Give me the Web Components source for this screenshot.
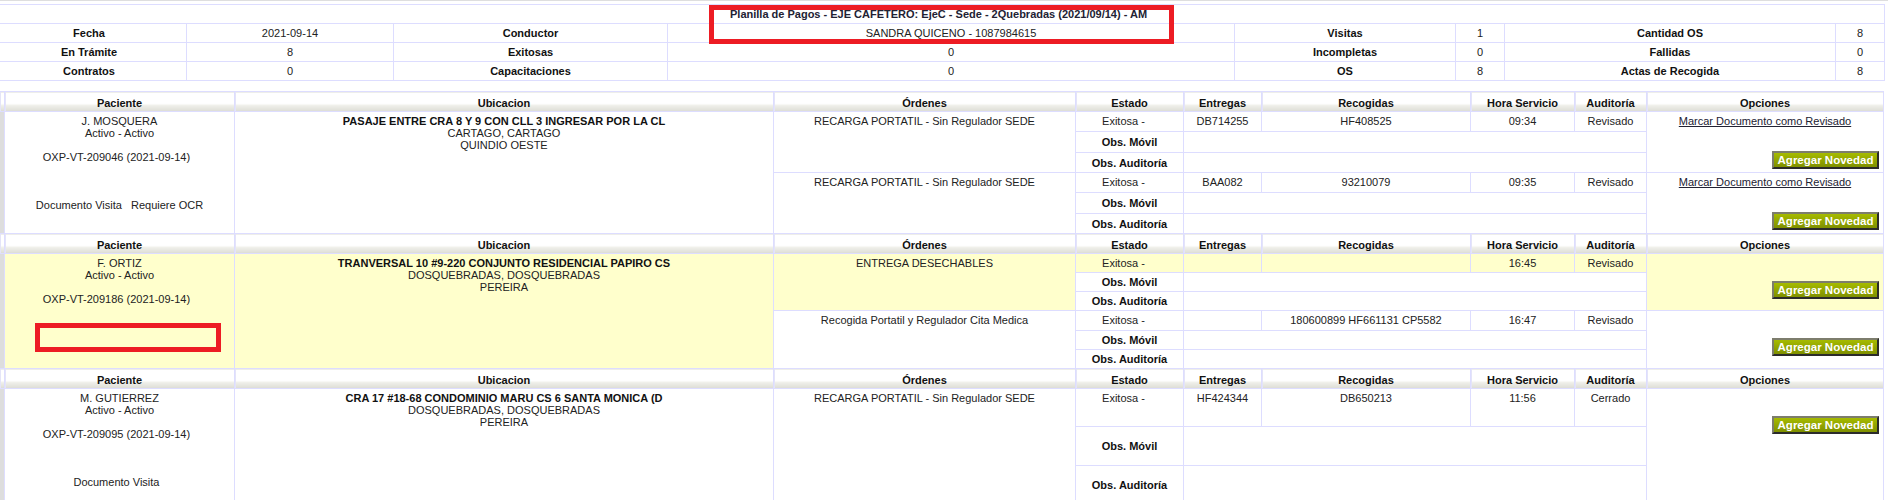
<!DOCTYPE html>
<html lang="es">
<head>
<meta charset="utf-8">
<title>Planilla de Pagos</title>
<style>
    html, body { margin: 0; padding: 0; background: #fff; overflow: hidden; height: 500px; }
    body { font-family: "Liberation Sans", Arial, sans-serif; font-size: 11px; color: #222; }
</style>
</head>
<body>
<top-rule></top-rule>
<plan-summary></plan-summary>
<visit-table></visit-table>
<red-mark style="--x: 709px; --y: 5px; --w: 465px; --h: 39px;"></red-mark>
<red-mark style="--x: 35px; --y: 323px; --w: 186px; --h: 29px;"></red-mark>

<script>
// Thin grey line at the very top of the page
class TopRule extends HTMLElement {
    constructor() {
        super();
        this.attachShadow({ mode: 'open' });
        this.shadowRoot.innerHTML = `<style>:host { display: block; height: 1px; background: #dedede; }</style>`;
    }
}

// Red annotation rectangle drawn over the screenshot
class RedMark extends HTMLElement {
    constructor() {
        super();
        this.attachShadow({ mode: 'open' });
        this.shadowRoot.innerHTML = `
            <style>
                :host {
                    display: block; position: absolute; box-sizing: border-box;
                    left: var(--x); top: var(--y); width: var(--w); height: var(--h);
                    border: 5px solid #ed1c24;
                }
            </style>`;
    }
}

class NovedadButton extends HTMLElement {
    constructor() {
        super();
        this.attachShadow({ mode: 'open' });
        this.shadowRoot.innerHTML = `
            <style>
                :host { display: inline-block; }
                button {
                    display: block; box-sizing: border-box; width: 107px; height: 18px; padding: 0; margin: 0;
                    font: bold 11.5px/14px "Liberation Sans", Arial, sans-serif; color: #fff; text-align: center;
                    background: linear-gradient(#a6bb00, #7f9000);
                    border: 2px solid; border-color: #7d7d6d #2b2b2b #2b2b2b #7d7d6d;
                    cursor: pointer;
                }
            </style>
            <button><slot></slot></button>`;
    }
}

// Top table with the totals of the planilla
class PlanSummary extends HTMLElement {
    connectedCallback() {
        const rows = [
            ['Fecha', '2021-09-14', 'Conductor', 'SANDRA QUICENO - 1087984615', 'Visitas', '1', 'Cantidad OS', '8'],
            ['En Trámite', '8', 'Exitosas', '0', 'Incompletas', '0', 'Fallidas', '0'],
            ['Contratos', '0', 'Capacitaciones', '0', 'OS', '8', 'Actas de Recogida', '8'],
        ];
        // first column starts left of the window, it is cut by the edge
        const widths = [195, 207, 274, 567, 221, 49, 331, 49];
        this.attachShadow({ mode: 'open' });
        this.shadowRoot.innerHTML = `
            <style>
                :host { display: block; margin-top: 3px; height: 76px; }
                table { border-collapse: collapse; table-layout: fixed; width: 1893px; margin-left: -9px; }
                tr { height: 19px; }
                th, td { border: 1px solid #ddf; padding: 0; text-align: center; color: #222; font-size: 11px; line-height: 12px; }
                th { color: #111; }
                .title { color: #223; font-weight: bold; padding-left: 1px; }
            </style>
            <table>
                <colgroup>${widths.map(w => `<col style="width:${w}px">`).join('')}</colgroup>
                <tr><td class="title" colspan="8">Planilla de Pagos - EJE CAFETERO: EjeC - Sede - 2Quebradas (2021/09/14) - AM</td></tr>
                ${rows.map(r => `<tr>${r.map((c, i) => i % 2 ? `<td>${c}</td>` : `<th>${c}</th>`).join('')}</tr>`).join('')}
            </table>`;
    }
}

const LINK = 'Marcar Documento como Revisado';
const NOVEDAD = '<novedad-button>Agregar Novedad</novedad-button>';

const VISITS = [
    {
        patient: ['J. MOSQUERA', 'Activo - Activo', '', 'OXP-VT-209046 (2021-09-14)&nbsp;&nbsp;', '', '', '', 'Documento Visita &nbsp; Requiere OCR'],
        place: ['PASAJE ENTRE CRA 8 Y 9 CON CLL 3 INGRESAR POR LA CL', 'CARTAGO, CARTAGO', 'QUINDIO OESTE'],
        headHeight: 20,
        orders: [
            { name: 'RECARGA PORTATIL - Sin Regulador SEDE', ent: 'DB714255', rec: 'HF408525', hora: '09:34', aud: 'Revisado', link: true, heights: [20, 21, 20] },
            { name: 'RECARGA PORTATIL - Sin Regulador SEDE', ent: 'BAA082', rec: '93210079', hora: '09:35', aud: 'Revisado', link: true, heights: [20, 21, 20] },
        ],
    },
    {
        patient: ['F. ORTIZ', 'Activo - Activo', '', 'OXP-VT-209186 (2021-09-14)&nbsp;&nbsp;'],
        place: ['TRANVERSAL 10 #9-220 CONJUNTO RESIDENCIAL PAPIRO CS', 'DOSQUEBRADAS, DOSQUEBRADAS', 'PEREIRA'],
        yellow: true,
        headHeight: 20,
        orders: [
            { name: 'ENTREGA DESECHABLES', ent: '', rec: '', hora: '16:45', aud: 'Revisado', yellow: true, heights: [19, 19, 19] },
            { name: 'Recogida Portatil y Regulador Cita Medica', ent: '', rec: '180600899 HF661131 CP5582', hora: '16:47', aud: 'Revisado', heights: [20, 19, 19] },
        ],
    },
    {
        patient: ['M. GUTIERREZ', 'Activo - Activo', '', 'OXP-VT-209095 (2021-09-14)&nbsp;&nbsp;', '', '', '', 'Documento Visita&nbsp;&nbsp;'],
        place: ['CRA 17 #18-68 CONDOMINIO MARU CS 6 SANTA MONICA (D', 'DOSQUEBRADAS, DOSQUEBRADAS', 'PEREIRA'],
        headHeight: 20,
        orders: [
            { name: 'RECARGA PORTATIL - Sin Regulador SEDE', ent: 'HF424344', rec: 'DB650213', hora: '11:56', aud: 'Cerrado', heights: [38, 39, 39] },
        ],
    },
];

// Main table: every visit repeats the header and then lists its orders
class VisitTable extends HTMLElement {
    connectedCallback() {
        const widths = [5, 230, 539, 302, 108, 78, 209, 104, 72, 237];
        this.attachShadow({ mode: 'open' });
        this.shadowRoot.innerHTML = `
            <style>
                :host { display: block; margin-top: 11px; }
                table { border-collapse: collapse; table-layout: fixed; width: 1885px; margin-left: -1px; }
                th, td { border: 1px solid #ddf; padding: 0; text-align: center; font-size: 11px; line-height: 12px; color: #222; }
                td { vertical-align: top; padding-top: 3px; }
                .strip { background: #ddd; padding: 0; border-left: 0; }
                .head th {
                    color: #111; vertical-align: top; padding-top: 5px;
                    background: linear-gradient(#fff 60%, #f1f1ec 66%, #dcdcd4 100%);
                    box-shadow: inset 1px 0 0 #e4e4f8;
                }
                .obs { color: #111; font-weight: bold; }
                th.obs { vertical-align: middle; }
                .place b { color: #111; }
                .yellow { background: #ffc; }
                .state { padding-right: 12px; }
                .options { text-align: right; }
                .options a { display: block; height: 13px; text-align: center; color: #223; text-decoration: underline; }
                .options .gap { padding: 24px 4px 0 0; }
                .options a + .gap { padding-top: 23px; }
            </style>
            <table>
                <colgroup>${widths.map(w => `<col style="width:${w}px">`).join('')}</colgroup>
                ${VISITS.map(v => this.renderVisit(v)).join('')}
            </table>`;
    }

    renderVisit(visit) {
        const titles = ['', 'Paciente', 'Ubicacion', 'Órdenes', 'Estado', 'Entregas', 'Recogidas', 'Hora Servicio', 'Auditoría', 'Opciones'];
        const span = visit.orders.length * 3;
        const yellow = visit.yellow ? 'yellow' : '';
        const leftCells = `
            <td class="strip" rowspan="${span}"></td>
            <td class="${yellow}" rowspan="${span}">${visit.patient.map(l => l || '&nbsp;').join('<br>')}</td>
            <td class="place ${yellow}" rowspan="${span}"><b>${visit.place[0]}</b><br>${visit.place[1]}<br>${visit.place[2]}</td>`;
        const head = `<tr class="head" style="height:${visit.headHeight}px">${titles.map(t => `<th>${t}</th>`).join('')}</tr>`;
        return head + visit.orders.map((o, i) => this.renderOrder(o, i === 0 ? leftCells : '')).join('');
    }

    renderOrder(order, leftCells) {
        const y = order.yellow ? 'yellow' : '';
        return `
            <tr style="height:${order.heights[0]}px">
                ${leftCells}
                <td class="${y}" rowspan="3">${order.name}</td>
                <td class="state ${y}">Exitosa -</td>
                <td class="${y}">${order.ent}</td>
                <td class="${y}">${order.rec}</td>
                <td class="${y}">${order.hora}</td>
                <td class="${y}">${order.aud}</td>
                <td class="options ${y}" rowspan="3">
                    ${order.link ? `<a href="#">${LINK}</a>` : ''}
                    <div class="gap">${NOVEDAD}</div>
                </td>
            </tr>
            <tr style="height:${order.heights[1]}px"><th class="obs">Obs. Móvil</th><td colspan="4"></td></tr>
            <tr style="height:${order.heights[2]}px"><th class="obs">Obs. Auditoría</th><td colspan="4"></td></tr>`;
    }
}

customElements.define('top-rule', TopRule);
customElements.define('red-mark', RedMark);
customElements.define('novedad-button', NovedadButton);
customElements.define('plan-summary', PlanSummary);
customElements.define('visit-table', VisitTable);
</script>
</body>
</html>
